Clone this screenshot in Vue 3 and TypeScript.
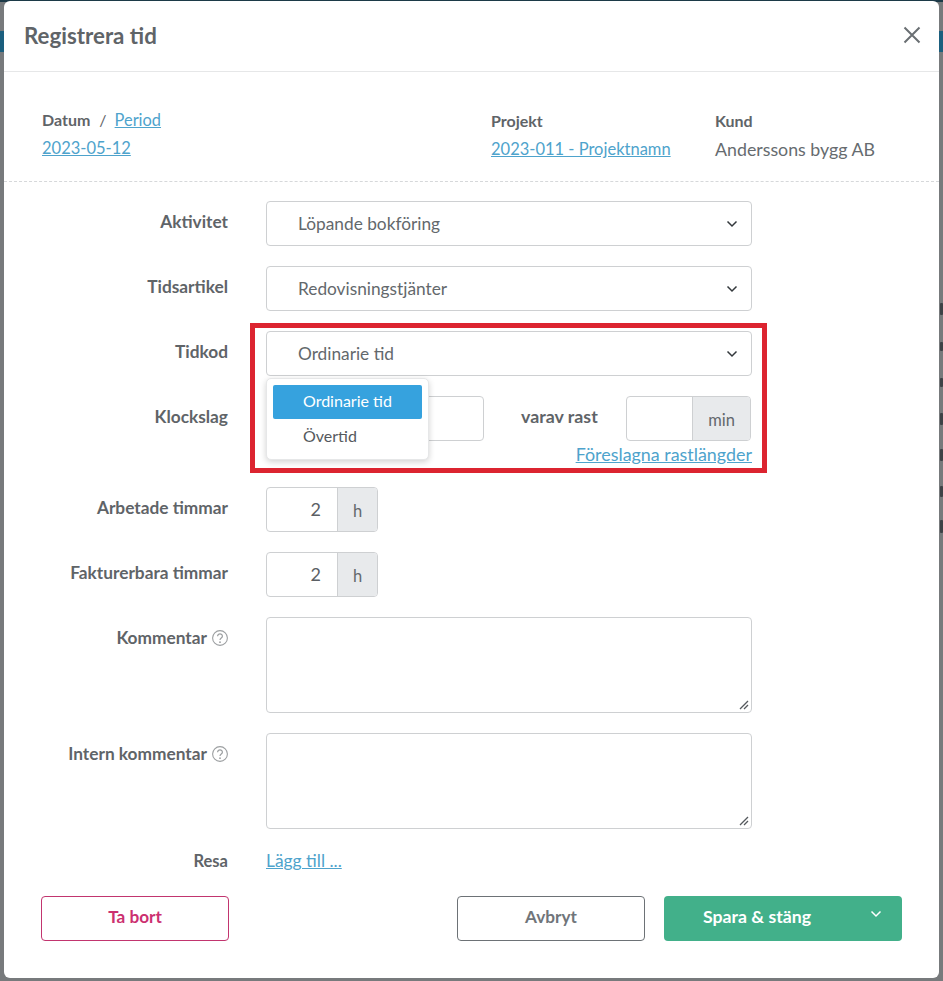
<script setup lang="ts">
const closeIcon = 'M2.5 2.5 L17.5 17.5 M17.5 2.5 L2.5 17.5'
const bits = [
  { top: 303, h: 12 },
  { top: 342, h: 9 },
  { top: 378, h: 9 },
  { top: 413, h: 12 },
  { top: 449, h: 12 },
  { top: 486, h: 11 },
  { top: 520, h: 13 },
]
</script>

<template>
  <div class="page">
    <div class="backdrop" aria-hidden="true">
      <div class="bd-top"></div>
      <div class="bd-band"></div>
      <i v-for="b in bits" :key="b.top" class="bit" :style="{ top: b.top + 'px', height: b.h + 'px' }"></i>
    </div>
    <div class="modal">
      <header class="head">
        <h1>Registrera tid</h1>
        <svg class="close" width="20" height="20" viewBox="0 0 20 20"><path :d="closeIcon" /></svg>
      </header>

      <section class="info">
        <div class="info-date">
          <div class="info-label"><b>Datum</b><span class="slash">/</span><a class="period">Period</a></div>
          <a class="val">2023-05-12</a>
        </div>
        <div class="info-proj">
          <div class="info-label"><b>Projekt</b></div>
          <a class="val">2023-011 - Projektnamn</a>
        </div>
        <div class="info-kund">
          <div class="info-label"><b>Kund</b></div>
          <span class="val plain">Anderssons bygg AB</span>
        </div>
      </section>

      <section class="form">
        <div class="row">
          <label>Aktivitet</label>
          <div class="select"><span>Löpande bokföring</span><svg class="chev" width="12" height="8" viewBox="0 0 12 8"><path d="M1.5 1.5 L6 6 L10.5 1.5" /></svg></div>
        </div>
        <div class="row">
          <label>Tidsartikel</label>
          <div class="select"><span>Redovisningstjänter</span><svg class="chev" width="12" height="8" viewBox="0 0 12 8"><path d="M1.5 1.5 L6 6 L10.5 1.5" /></svg></div>
        </div>

        <div class="marked">
          <div class="redbox"></div>
          <div class="row">
            <label>Tidkod</label>
            <div class="select"><span>Ordinarie tid</span><svg class="chev" width="12" height="8" viewBox="0 0 12 8"><path d="M1.5 1.5 L6 6 L10.5 1.5" /></svg></div>
          </div>
          <div class="row clock">
            <label>Klockslag</label>
            <div class="clock-body">
              <div class="blank"></div>
              <span class="varav">varav rast</span>
              <div class="group minutes"><div class="field"></div><div class="addon">min</div></div>
            </div>
            <div class="menu">
              <div class="opt active">Ordinarie tid</div>
              <div class="opt">Övertid</div>
            </div>
          </div>
          <a class="suggest">Föreslagna rastlängder</a>
        </div>

        <div class="row hours">
          <label>Arbetade timmar</label>
          <div class="group hrs"><div class="field num">2</div><div class="addon">h</div></div>
        </div>
        <div class="row">
          <label>Fakturerbara timmar</label>
          <div class="group hrs"><div class="field num">2</div><div class="addon">h</div></div>
        </div>
        <div class="row tall">
          <label>Kommentar<svg class="help" width="16" height="16" viewBox="0 0 16 16"><circle cx="8" cy="8" r="7.4" /><path d="M5.6 6.2 C5.6 3.2 10.4 3.2 10.4 6.2 C10.4 8 8 7.9 8 10" /><circle class="dot" cx="8" cy="12.2" r=".9" /></svg></label>
          <div class="area"><svg class="grip" width="10" height="10" viewBox="0 0 10 10"><path d="M1 9 L9 1 M5 9 L9 5" /></svg></div>
        </div>
        <div class="row tall">
          <label>Intern kommentar<svg class="help" width="16" height="16" viewBox="0 0 16 16"><circle cx="8" cy="8" r="7.4" /><path d="M5.6 6.2 C5.6 3.2 10.4 3.2 10.4 6.2 C10.4 8 8 7.9 8 10" /><circle class="dot" cx="8" cy="12.2" r=".9" /></svg></label>
          <div class="area"><svg class="grip" width="10" height="10" viewBox="0 0 10 10"><path d="M1 9 L9 1 M5 9 L9 5" /></svg></div>
        </div>
        <div class="row trip">
          <label>Resa</label>
          <a class="add">Lägg till ...</a>
        </div>
      </section>

      <footer class="foot">
        <button class="btn danger">Ta bort</button>
        <div class="foot-right">
          <button class="btn cancel">Avbryt</button>
          <button class="btn save">
            <span>Spara &amp; stäng</span>
            <svg width="12" height="8" viewBox="0 0 12 8"><path d="M1.5 1.5 L6 6 L10.5 1.5" /></svg>
          </button>
        </div>
      </footer>
    </div>
  </div>
</template>

<style>
html, body { margin: 0; padding: 0; }
</style>

<style scoped>
.page {
  position: relative;
  width: 943px;
  height: 981px;
  overflow: hidden;
  background: #777a7c;
  font-family: "Lato", "Liberation Sans", sans-serif;
  color: #5f6468;
  box-sizing: border-box;
  padding: 1px 4px 3px 4px;
}
.backdrop { position: absolute; inset: 0; }
.bd-top { height: 2px; background: #1c3a48; }
.bd-band { margin-top: 29px; height: 21px; background: #1b5f7e; }
.bit { position: absolute; right: 0; width: 3px; background: #3d4246; border-radius: 1px; }
.modal {
  position: relative;
  height: 977px;
  background: #fff;
  border-radius: 6px;
  display: flex;
  flex-direction: column;
}
.head {
  height: 71px;
  box-sizing: border-box;
  border-bottom: 1px solid #e6e7e8;
  display: flex;
  align-items: center;
  justify-content: space-between;
  padding: 0 17px 2px 20px;
}
.head h1 { margin: 0; font-size: 22.3px; font-weight: 700; color: #5f6468; }
.close path { stroke: #6a6f73; stroke-width: 2; fill: none; }
.info {
  height: 110px;
  border-bottom: 1px dashed #d6d8da;
  display: flex;
  padding: 37px 0 0 38px;
  box-sizing: border-box;
}
.info-date { width: 449px; }
.info-proj { width: 224px; padding-top: 1px; }
.info-kund { padding-top: 1px; }
.info-label { font-size: 16px; line-height: 22px; height: 26px; }
.info-label b { font-weight: 700; color: #5f6468; }
.slash { margin: 0 8px 0 9px; }
.val, .period, .add, .suggest { color: #4ea3cc; text-decoration: underline; }
.val { font-size: 16.5px; line-height: 26px; display: block; }
.plain { font-size: 17.8px; color: #666b6f; text-decoration: none; }
.period { font-size: 16.4px; }
.form { padding-top: 19px; display: flex; flex-direction: column; gap: 20px; }
.row {
  position: relative;
  display: flex;
  align-items: flex-start;
}
.row label {
  width: 224px;
  margin-right: 38px;
  text-align: right;
  font-size: 17.3px;
  font-weight: 700;
  color: #5f6468;
  line-height: 42px;
  white-space: nowrap;
  display: flex;
  justify-content: flex-end;
  align-items: center;
}
.select {
  width: 486px;
  height: 45px;
  box-sizing: border-box;
  border: 1px solid #ced0d2;
  border-radius: 4px;
  display: flex;
  align-items: center;
  justify-content: space-between;
  padding: 0 13px 0 31px;
  font-size: 17.3px;
  color: #63686c;
}
.chev path { stroke: #33383c; stroke-width: 1.5; fill: none; }
.marked { position: relative; display: flex; flex-direction: column; gap: 20px; }
.redbox {
  position: absolute;
  left: 246px;
  top: -8px;
  width: 517px;
  height: 150px;
  box-sizing: border-box;
  border: 5px solid #dc2430;
  pointer-events: none;
}
.clock-body { width: 485px; display: flex; align-items: flex-start; }
.blank {
  width: 218px;
  height: 45px;
  box-sizing: border-box;
  border: 1px solid #ced0d2;
  border-radius: 4px;
}
.varav { margin-left: 37px; font-size: 17.8px; font-weight: 700; line-height: 41px; color: #5f6468; width: 105px; white-space: nowrap; }
.group { display: flex; height: 45px; box-sizing: border-box; border: 1px solid #ced0d2; border-radius: 4px; overflow: hidden; }
.field { flex: 1; }
.addon {
  background: #e8eaec;
  border-left: 1px solid #ced0d2;
  font-size: 16.5px;
  color: #63686c;
  display: flex;
  align-items: center;
  justify-content: center;
  padding-top: 2px;
}
.minutes { width: 125px; }
.minutes .addon { width: 57px; }
.hrs { width: 112px; }
.hrs .addon { width: 39px; }
.num { font-size: 18px; text-align: right; padding: 10px 16px 0 0; color: #5b6064; }
.menu {
  position: absolute;
  left: 262px;
  top: -18px;
  width: 163px;
  height: 82px;
  box-sizing: border-box;
  background: #fff;
  border: 1px solid #e6e7e8;
  border-radius: 5px;
  box-shadow: 0 2px 6px rgba(0,0,0,.18);
  padding: 6px;
  font-size: 16px;
}
.opt { height: 34px; line-height: 32px; padding-left: 30px; color: #55595d; }
.opt + .opt { margin-top: 1px; }
.active { background: #36a2de; color: #fff; border-radius: 2px; }
.suggest {
  position: absolute;
  right: 187px;
  bottom: -24px;
  font-size: 17.9px;
}
.hours { margin-top: 26px; }
.tall label { align-items: center; }
.help { margin-left: 5px; }
.help circle { fill: none; stroke: #9c9fa1; stroke-width: 1.1; }
.help path { fill: none; stroke: #9c9fa1; stroke-width: 1.2; }
.help .dot { fill: #9c9fa1; stroke: none; }
.area {
  position: relative;
  width: 486px;
  height: 96px;
  box-sizing: border-box;
  border: 1px solid #ced0d2;
  border-radius: 4px;
}
.grip { position: absolute; right: 2px; bottom: 2px; }
.grip path { stroke: #55595d; stroke-width: 1.3; fill: none; }
.trip { margin-top: 1px; height: 24px; }
.trip label { font-size: 16.5px; line-height: 22px; }
.add { font-size: 17.4px; line-height: 22px; }
.foot {
  position: absolute;
  left: 37px;
  right: 37px;
  bottom: 37px;
  display: flex;
  justify-content: space-between;
}
.foot-right { display: flex; gap: 19px; }
.btn {
  height: 45px;
  font-family: inherit;
  font-size: 17.2px;
  font-weight: 700;
  border-radius: 4px;
  background: #fff;
  box-sizing: border-box;
  padding: 0 0 4px;
}
.danger { width: 188px; border: 1px solid #c2356f; color: #cc3070; }
.cancel { width: 188px; border: 1px solid #6d7276; color: #70757a; }
.save {
  width: 238px;
  border: none;
  background: #42b08a;
  color: #fff;
  display: flex;
  align-items: center;
  padding: 0 20px 4px 39px;
  justify-content: space-between;
  font-size: 17.7px;
}
.save svg { margin-top: -6px; }
.save path { stroke: #fff; stroke-width: 1.5; fill: none; }
</style>
